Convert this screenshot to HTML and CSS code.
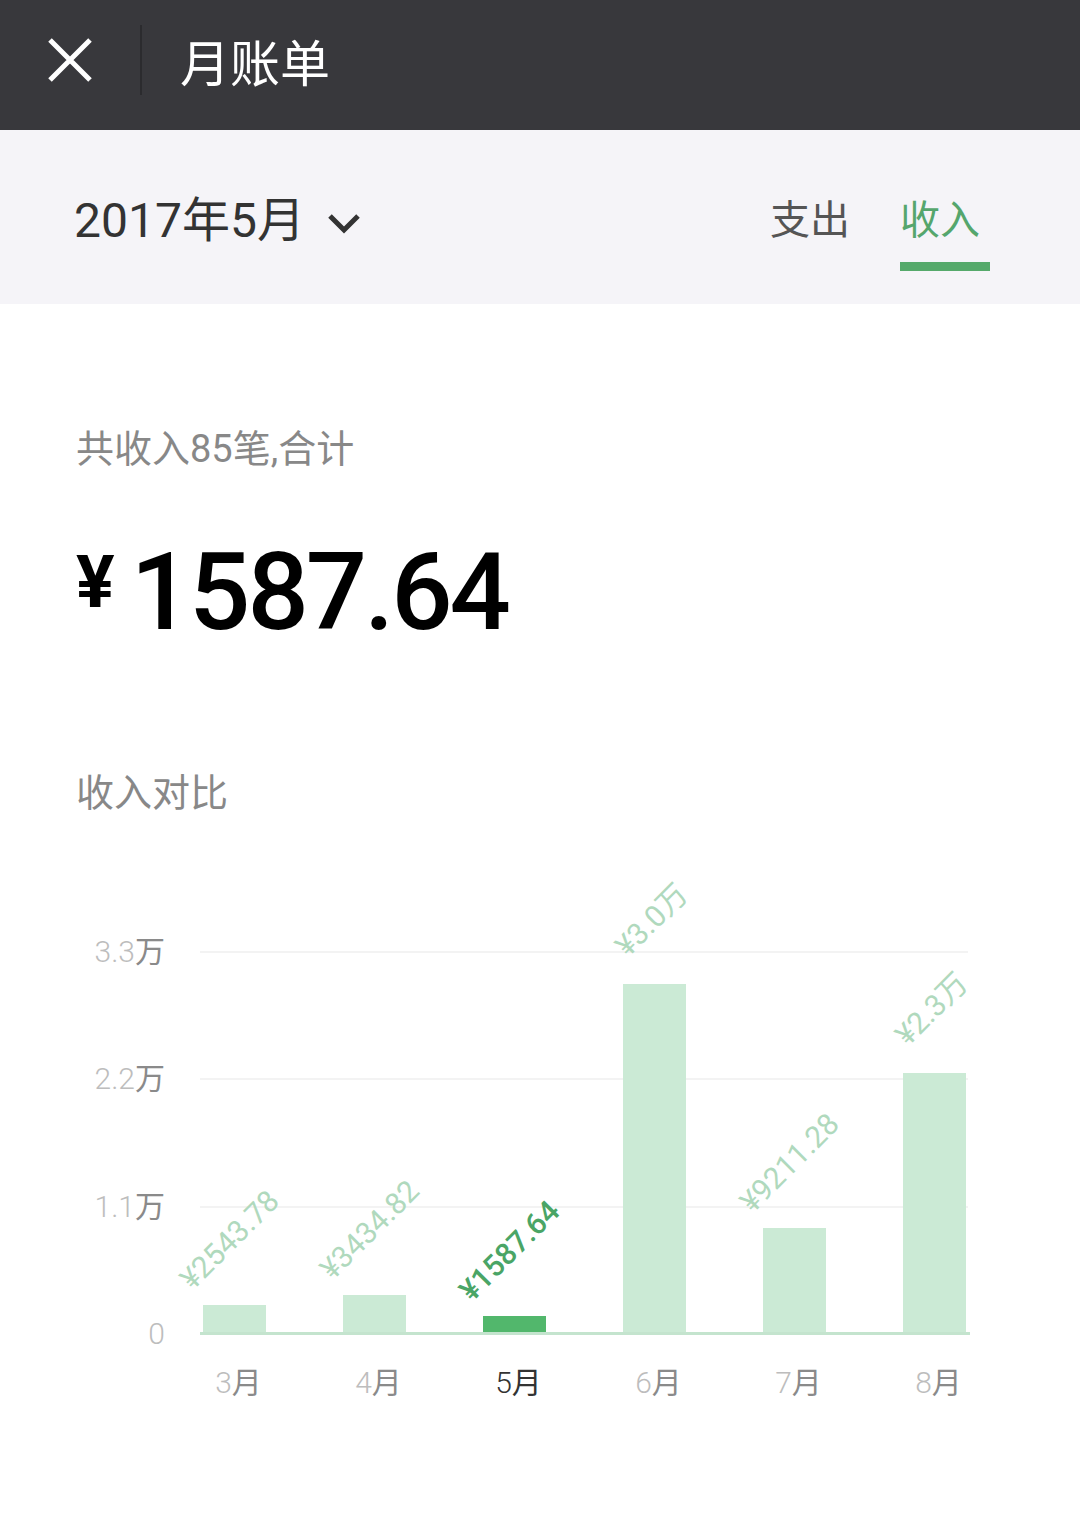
FILE: index.html
```html
<!DOCTYPE html>
<html lang="zh-CN">
<head>
    <meta charset="UTF-8">
    <meta name="viewport" content="width=device-width, initial-scale=1.0">
    <title>月账单</title>
    <link rel="stylesheet" href="styles.css">
</head>
<body>

<div class="topbar">
    <svg class="close-icon" width="46" height="46" viewBox="0 0 46 46">
        <path d="M3 3 L43 43 M43 3 L3 43" stroke="#fff" stroke-width="5" fill="none"/>
    </svg>
    <div class="topbar-divider"></div>
    <div class="topbar-title">月账单</div>
</div>

<div class="filter-bar">
    <div class="month-picker">
        <span class="month-text">2017年5月</span>
        <svg class="chevron" width="34" height="22" viewBox="0 0 34 22">
            <path d="M3 4 L17 18 L31 4" stroke="#333" stroke-width="5" fill="none"/>
        </svg>
    </div>
    <div class="tabs">
        <div class="tab">支出</div>
        <div class="tab active">收入</div>
    </div>
</div>

<div class="summary">
    <div class="summary-label">共收入85笔,合计</div>
    <div class="summary-amount"><span class="yen">¥</span>1587.64</div>
    <div class="section-title">收入对比</div>
</div>

<div class="chart">
    <div class="plot">
        <!-- grid lines and y labels sit under the bars -->
        <div class="grid">
            <div class="tick"><span class="tick-label"><span class="num">3.3</span>万</span><span class="tick-line"></span></div>
            <div class="tick"><span class="tick-label"><span class="num">2.2</span>万</span><span class="tick-line"></span></div>
            <div class="tick"><span class="tick-label"><span class="num">1.1</span>万</span><span class="tick-line"></span></div>
            <div class="tick"><span class="tick-label"><span class="num">0</span></span><span class="tick-line base"></span></div>
        </div>

        <div class="bars">
            <div class="col">
                <div class="val"><span>¥2543.78</span></div>
                <div class="bar" style="height: 29px"></div>
            </div>
            <div class="col">
                <div class="val"><span>¥3434.82</span></div>
                <div class="bar" style="height: 39px"></div>
            </div>
            <div class="col current">
                <div class="val"><span>¥1587.64</span></div>
                <div class="bar" style="height: 18px"></div>
            </div>
            <div class="col">
                <div class="val"><span>¥3.0万</span></div>
                <div class="bar" style="height: 350px"></div>
            </div>
            <div class="col">
                <div class="val"><span>¥9211.28</span></div>
                <div class="bar" style="height: 106px"></div>
            </div>
            <div class="col">
                <div class="val"><span>¥2.3万</span></div>
                <div class="bar" style="height: 261px"></div>
            </div>
        </div>
    </div>

    <div class="months">
        <div class="month"><span class="num">3</span>月</div>
        <div class="month"><span class="num">4</span>月</div>
        <div class="month current"><span class="num">5</span>月</div>
        <div class="month"><span class="num">6</span>月</div>
        <div class="month"><span class="num">7</span>月</div>
        <div class="month"><span class="num">8</span>月</div>
    </div>
</div>

</body>
</html>
```

FILE: styles.css
```css
body {
    margin: 0;
    background-color: #fff;
    font-family: Roboto, "Noto Sans CJK SC", sans-serif;
}

.topbar {
    height: 130px;
    box-sizing: border-box;
    background-color: #38383c;
    display: flex;
    align-items: center;
    padding: 0 0 10px 47px;
}

.close-icon {
    display: block;
}

.topbar-divider {
    width: 2px;
    height: 70px;
    background-color: #2b2b2e;
    margin-left: 47px;
}

.topbar-title {
    margin-left: 38px;
    color: #fff;
    font-family: "Noto Sans CJK SC", sans-serif;
    font-size: 50px;
    line-height: 1;
}

.filter-bar {
    height: 174px;
    background-color: #f5f4f8;
    display: flex;
    justify-content: space-between;
    align-items: stretch;
    padding: 0 90px 0 74px;
}

.month-picker {
    display: flex;
    align-items: center;
    padding-top: 8px;
}

.month-text {
    font-size: 48px;
    color: #333;
    line-height: 1;
}

.chevron {
    margin-left: 22px;
    margin-top: 4px;
}

.tabs {
    display: flex;
    gap: 45px;
}

.tab {
    width: 90px;
    text-align: center;
    font-family: "Noto Sans CJK SC", sans-serif;
    font-size: 40px;
    line-height: 1;
    color: #555;
    padding-top: 67px;
    box-sizing: border-box;
}

.tab.active {
    color: #55a66d;
    text-align: left;
}

.tab.active::after {
    content: "";
    display: block;
    height: 9px;
    margin-top: 25px;
    background-color: #55a96b;
}

.summary {
    padding: 126px 76px 0;
}

.summary-label {
    font-size: 38px;
    line-height: 1;
    color: #888;
}

.summary-amount {
    margin-top: 70px;
    font-size: 108px;
    font-weight: 500;
    letter-spacing: -3px;
    line-height: 1;
    color: #000;
}

.yen {
    font-size: 72px;
    font-weight: 700;
    vertical-align: 22px;
    margin-right: 16px;
    letter-spacing: 0;
}

.section-title {
    margin-top: 125px;
    font-family: "Noto Sans CJK SC", sans-serif;
    font-size: 38px;
    line-height: 1;
    color: #888;
}

.chart {
    margin-top: 143px;
}

.plot {
    position: relative;
    height: 382px;
}

.grid {
    position: absolute;
    inset: 0;
    display: flex;
    flex-direction: column;
    justify-content: space-between;
}

.tick {
    height: 0;
    display: flex;
    align-items: center;
}

.tick-label {
    width: 165px;
    text-align: right;
    font-family: "Noto Sans CJK SC", sans-serif;
    font-size: 30px;
    color: #8a8a8a;
    margin-top: -6px;
}

.num {
    font-family: Roboto, sans-serif;
    font-weight: 300;
    color: #bdbdbd;
}

.tick-line {
    margin-left: 35px;
    width: 768px;
    height: 2px;
    background-color: #f3f3f3;
}

.tick-line.base {
    height: 3px;
    width: 770px;
    background-color: #c4e4ce;
    position: relative;
    z-index: 2;
}

.bars {
    position: relative;
    height: 100%;
    display: flex;
    align-items: flex-end;
    gap: 77px;
    padding-left: 203px;
}

.col {
    width: 63px;
    display: flex;
    flex-direction: column;
    align-items: center;
}

.val {
    width: 63px;
    height: 0;
    margin-bottom: 66px;
    display: flex;
    justify-content: center;
    align-items: center;
    white-space: nowrap;
}

.val span {
    transform: rotate(-45deg);
    margin-right: 10px;
    font-size: 30px;
    font-weight: 400;
    color: #b0d9bd;
    font-family: Roboto, "Noto Sans CJK SC", sans-serif;
}

.bar {
    width: 63px;
    background-color: #cbead5;
}

.col.current .bar {
    background-color: #52b76c;
}

.col.current .val span {
    color: #4aa566;
    font-weight: 500;
}

.months {
    display: flex;
    gap: 77px;
    padding-left: 207px;
    margin-top: 28px;
}

.month {
    width: 63px;
    text-align: center;
    font-family: "Noto Sans CJK SC", sans-serif;
    font-size: 30px;
    line-height: 36px;
    color: #8a8a8a;
    white-space: nowrap;
}

.month.current,
.month.current .num {
    color: #333;
}
```
